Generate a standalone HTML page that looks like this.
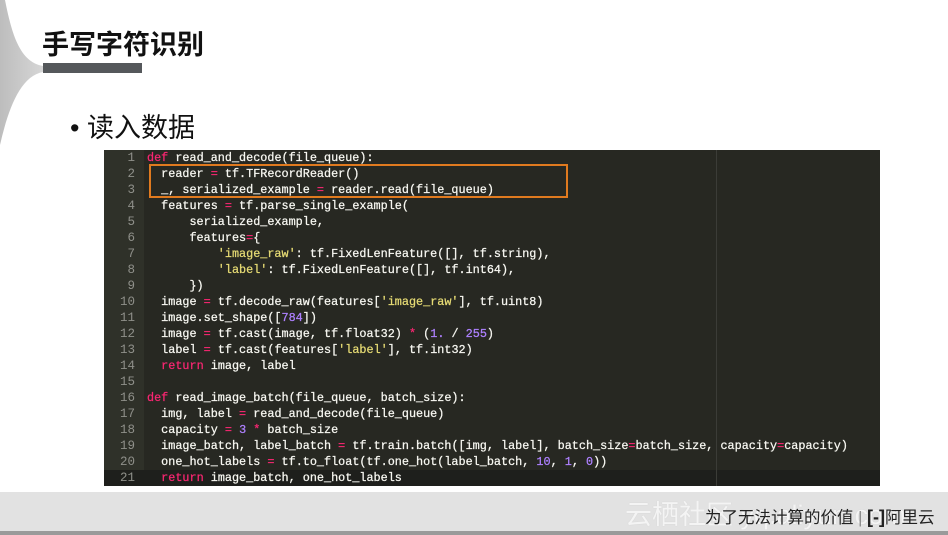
<!DOCTYPE html>
<html><head><meta charset="utf-8"><style>
body{margin:0;width:948px;height:535px;background:#fff;position:relative;overflow:hidden;font-family:"Liberation Sans","Noto Sans CJK SC",sans-serif}
.t{position:absolute;left:42px;top:23px;font-size:27px;font-weight:bold;color:#111}
.bar{position:absolute;left:43px;top:63px;width:99px;height:10px;background:#55585b}
.b{position:absolute;left:70px;top:106px;font-size:27px;color:#111}
.code{position:absolute;left:104px;top:150px;width:776px;height:336px;background:#272822;overflow:hidden}
.gut{position:absolute;left:0;top:0;width:40px;height:336px;background:#2f3129}
.cur{position:absolute;left:0;top:320px;width:776px;height:16px;background:#1e1f1c}
.pm{position:absolute;left:612px;top:0;width:1px;height:336px;background:#3b3c37}
.ln{position:absolute;left:0;width:31px;text-align:right;color:#8f908a;font-family:"Liberation Mono",monospace;font-size:12.5px;line-height:16px}
.cl{position:absolute;left:43px;white-space:pre;color:#f8f8f2;font-family:"Liberation Mono",monospace;font-size:11.8px;line-height:16px;-webkit-text-stroke:0.25px #f8f8f2}
.k{color:#f92672;-webkit-text-stroke-color:#f92672}.s{color:#e6db74;-webkit-text-stroke-color:#e6db74}.n{color:#ae81ff;-webkit-text-stroke-color:#ae81ff}
.box{position:absolute;left:149px;top:164px;width:419px;height:34px;border:2px solid #e07a1f;box-sizing:border-box}
.foot{position:absolute;left:0;top:492px;width:948px;height:39px;background:#e2e2e2;border-bottom:4px solid #9a9a9a}
.ft{position:absolute;left:705px;top:504px;font-size:16.5px;color:#222;white-space:nowrap}
.wm{position:absolute;left:625px;top:493px;font-size:27px;color:#f4f4f4;white-space:nowrap;text-shadow:0 0 1px #ccc}
</style></head><body>
<svg style="position:absolute;left:0;top:0" width="50" height="150"><defs><linearGradient id="g" x1="0" x2="1"><stop offset="0" stop-color="#bdbdbd"/><stop offset="1" stop-color="#d6d6d6"/></linearGradient></defs><path d="M0 0 L5 0 C12 35 20 62 43 66 L43 72 C20 76 8 110 0 145 Z" fill="url(#g)"/></svg>
<div class="t">手写字符识别</div>
<div class="bar"></div>
<div class="b">• 读入数据</div>
<div class="code">
<div class="gut"></div><div class="cur"></div><div class="pm"></div>
<div class="ln" style="top:0">1</div><div class="ln" style="top:16px">2</div><div class="ln" style="top:32px">3</div><div class="ln" style="top:48px">4</div><div class="ln" style="top:64px">5</div><div class="ln" style="top:80px">6</div><div class="ln" style="top:96px">7</div><div class="ln" style="top:112px">8</div><div class="ln" style="top:128px">9</div><div class="ln" style="top:144px">10</div><div class="ln" style="top:160px">11</div><div class="ln" style="top:176px">12</div><div class="ln" style="top:192px">13</div><div class="ln" style="top:208px">14</div><div class="ln" style="top:224px">15</div><div class="ln" style="top:240px">16</div><div class="ln" style="top:256px">17</div><div class="ln" style="top:272px">18</div><div class="ln" style="top:288px">19</div><div class="ln" style="top:304px">20</div><div class="ln" style="top:320px">21</div>
<div class="cl" style="top:0"><span class="k">def</span> read_and_decode(file_queue):</div>
<div class="cl" style="top:16px">  reader <span class="k">=</span> tf.TFRecordReader()</div>
<div class="cl" style="top:32px">  _, serialized_example <span class="k">=</span> reader.read(file_queue)</div>
<div class="cl" style="top:48px">  features <span class="k">=</span> tf.parse_single_example(</div>
<div class="cl" style="top:64px">      serialized_example,</div>
<div class="cl" style="top:80px">      features<span class="k">=</span>{</div>
<div class="cl" style="top:96px">          <span class="s">'image_raw'</span>: tf.FixedLenFeature([], tf.string),</div>
<div class="cl" style="top:112px">          <span class="s">'label'</span>: tf.FixedLenFeature([], tf.int64),</div>
<div class="cl" style="top:128px">      })</div>
<div class="cl" style="top:144px">  image <span class="k">=</span> tf.decode_raw(features[<span class="s">'image_raw'</span>], tf.uint8)</div>
<div class="cl" style="top:160px">  image.set_shape([<span class="n">784</span>])</div>
<div class="cl" style="top:176px">  image <span class="k">=</span> tf.cast(image, tf.float32) <span class="k">*</span> (<span class="n">1.</span> / <span class="n">255</span>)</div>
<div class="cl" style="top:192px">  label <span class="k">=</span> tf.cast(features[<span class="s">'label'</span>], tf.int32)</div>
<div class="cl" style="top:208px">  <span class="k">return</span> image, label</div>
<div class="cl" style="top:240px"><span class="k">def</span> read_image_batch(file_queue, batch_size):</div>
<div class="cl" style="top:256px">  img, label <span class="k">=</span> read_and_decode(file_queue)</div>
<div class="cl" style="top:272px">  capacity <span class="k">=</span> <span class="n">3</span> <span class="k">*</span> batch_size</div>
<div class="cl" style="top:288px">  image_batch, label_batch <span class="k">=</span> tf.train.batch([img, label], batch_size<span class="k">=</span>batch_size, capacity<span class="k">=</span>capacity)</div>
<div class="cl" style="top:304px">  one_hot_labels <span class="k">=</span> tf.to_float(tf.one_hot(label_batch, <span class="n">10</span>, <span class="n">1</span>, <span class="n">0</span>))</div>
<div class="cl" style="top:320px">  <span class="k">return</span> image_batch, one_hot_labels</div>
</div>
<div class="box"></div>
<div class="foot"></div>
<div class="wm">云栖社区 yq.aliyun.com</div>
<div class="ft">为了无法计算的价值 <span style="color:#888">|</span> <b style="font-size:18px">[-]</b>阿里云</div>
</body></html>
